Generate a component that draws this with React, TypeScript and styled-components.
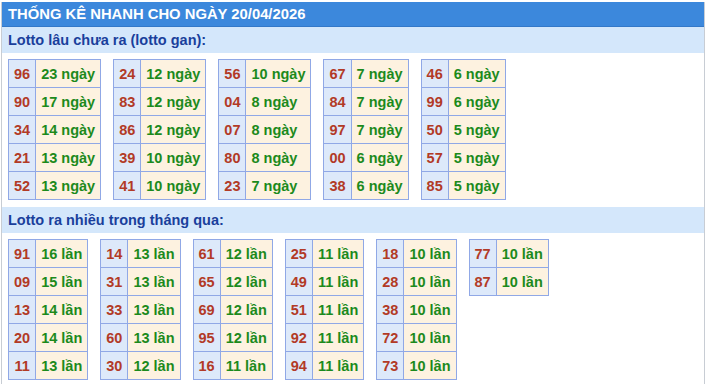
import React from 'react';
import styled, { createGlobalStyle } from 'styled-components';

const GlobalStyle = createGlobalStyle`
  body {
    margin: 0;
    background: #fff;
    font-family: "Liberation Sans", Arial, sans-serif;
  }
`;

const Wrapper = styled.div`
  margin: 2px 0 0 1px;
  width: 702px;
  border-left: 1px solid #c8cdd4;
  border-right: 1px solid #c8cdd4;
`;

const Title = styled.div`
  height: 24px;
  line-height: 25px;
  padding-left: 6px;
  background: #3c88dc;
  border-bottom: 1px solid #3378c8;
  color: #fff;
  font-size: 14.8px;
  font-weight: bold;
`;

const SubTitle = styled.div`
  height: 26px;
  line-height: 27px;
  padding-left: 6px;
  background: #d4e7fb;
  color: #1a3f9c;
  font-size: 14.5px;
  font-weight: bold;
`;

const Section = styled.div`
  display: flex;
  align-items: flex-start;
  gap: 12px;
  padding: 6px 6px 7px;
`;

const Table = styled.table`
  border-collapse: collapse;
  font-size: 14.5px;
  font-weight: bold;
`;

const NumCell = styled.td`
  height: 27px;
  padding: 0 5px;
  border: 1px solid #90a8e6;
  background: #dde9fa;
  color: #b23a26;
  text-align: center;
`;

const ValCell = styled.td`
  height: 27px;
  padding: 0 5px;
  border: 1px solid #90a8e6;
  background: #fdf2e0;
  color: #1c8a1c;
  white-space: nowrap;
`;

type Pair = [string, number];

const gan: Pair[][] = [
  [['96', 23], ['90', 17], ['34', 14], ['21', 13], ['52', 13]],
  [['24', 12], ['83', 12], ['86', 12], ['39', 10], ['41', 10]],
  [['56', 10], ['04', 8], ['07', 8], ['80', 8], ['23', 7]],
  [['67', 7], ['84', 7], ['97', 7], ['00', 6], ['38', 6]],
  [['46', 6], ['99', 6], ['50', 5], ['57', 5], ['85', 5]],
];

const nhieu: Pair[][] = [
  [['91', 16], ['09', 15], ['13', 14], ['20', 14], ['11', 13]],
  [['14', 13], ['31', 13], ['33', 13], ['60', 13], ['30', 12]],
  [['61', 12], ['65', 12], ['69', 12], ['95', 12], ['16', 11]],
  [['25', 11], ['49', 11], ['51', 11], ['92', 11], ['94', 11]],
  [['18', 10], ['28', 10], ['38', 10], ['72', 10], ['73', 10]],
  [['77', 10], ['87', 10]],
];

const Group = ({ rows, unit }: { rows: Pair[]; unit: string }) => (
  <Table>
    <tbody>
      {rows.map(([num, count]) => (
        <tr key={num}>
          <NumCell>{num}</NumCell>
          <ValCell>
            {count} {unit}
          </ValCell>
        </tr>
      ))}
    </tbody>
  </Table>
);

const App = () => (
  <>
    <GlobalStyle />
    <Wrapper>
      <Title>THỐNG KÊ NHANH CHO NGÀY 20/04/2026</Title>
      <SubTitle>Lotto lâu chưa ra (lotto gan):</SubTitle>
      <Section>
        {gan.map((g, i) => (
          <Group key={i} rows={g} unit="ngày" />
        ))}
      </Section>
      <SubTitle>Lotto ra nhiều trong tháng qua:</SubTitle>
      <Section>
        {nhieu.map((g, i) => (
          <Group key={i} rows={g} unit="lần" />
        ))}
      </Section>
    </Wrapper>
  </>
);

export default App;
